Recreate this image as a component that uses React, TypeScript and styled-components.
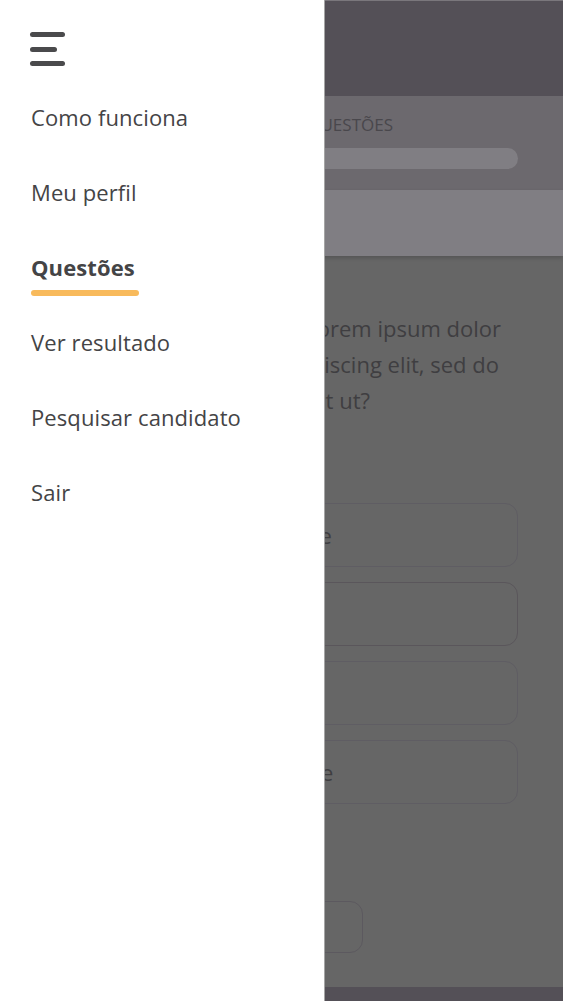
import React from "react";
import styled, { createGlobalStyle } from "styled-components";

const GlobalStyle = createGlobalStyle`
  html, body { margin: 0; padding: 0; }
  body { font-family: "Open Sans", "Noto Sans", sans-serif; background: #666666; }
  * { box-sizing: border-box; }
`;

const Screen = styled.div`
  position: relative;
  width: 563px;
  height: 1001px;
  overflow: hidden;
  background: #666666;
`;

/* ---------- underlying (dimmed) page ---------- */
const Page = styled.div`
  display: flex;
  flex-direction: column;
  height: 100%;
`;

const TopBar = styled.header`
  height: 96px;
  flex: none;
  background: #545057;
  border-top: 1px solid #7a777c;
`;

const ProgressSection = styled.section`
  height: 94px;
  flex: none;
  background: #6c696e;
  padding: 17px 45px 0;
  display: flex;
  flex-direction: column;
  gap: 11px;
`;

const ProgressLabel = styled.div`
  font-size: 17px;
  line-height: 24px;
  color: #49474c;
  text-transform: uppercase;
  text-align: right;
  padding-right: 125px;
`;

const Track = styled.div`
  height: 21px;
  border-radius: 11px;
  background: #807e83;
`;

const SubBar = styled.div`
  height: 66px;
  flex: none;
  background: #807e83;
  box-shadow: 0 2px 4px rgba(0, 0, 0, 0.18);
  position: relative;
  z-index: 1;
`;

const Content = styled.main`
  flex: 1;
  display: flex;
  flex-direction: column;
  padding: 54px 45px 0;
`;

const Question = styled.p`
  margin: 0;
  font-size: 22px;
  line-height: 36px;
  color: #3f3e41;
`;

const QLine = styled.span<{ $pr: number }>`
  display: block;
  white-space: nowrap;
  text-align: right;
  padding-right: ${(p) => p.$pr}px;
`;

const Options = styled.div`
  margin-top: 85px;
  display: flex;
  flex-direction: column;
  gap: 15px;
`;

const Option = styled.div<{ $selected?: boolean }>`
  height: 64px;
  border-radius: 13px;
  border: 1.5px solid ${(p) => (p.$selected ? "#5a565b" : "#5f5d63")};
  display: flex;
  align-items: center;
  gap: 16px;
  padding-left: 20px;
  font-size: 22px;
  color: #3f3e41;
`;

const Radio = styled.span`
  width: 24px;
  height: 24px;
  border-radius: 50%;
  border: 2px solid #555;
`;

const OptionText = styled.span<{ $shift: number }>`
  margin-left: ${(p) => p.$shift}px;
`;

const Actions = styled.div`
  margin-top: 97px;
  display: flex;
`;

const Button = styled.button`
  width: 318px;
  height: 52px;
  border-radius: 13px;
  border: 1.5px solid #5c595f;
  background: transparent;
  font: inherit;
  font-size: 18px;
  color: #3f3e41;
`;

const Footer = styled.footer`
  height: 14px;
  flex: none;
  margin-top: auto;
  background: #545057;
`;

/* ---------- drawer ---------- */
const Drawer = styled.nav`
  position: absolute;
  left: 0;
  top: 0;
  bottom: 0;
  width: 325px;
  background: #ffffff;
  border-right: 1px solid #a5a5a5;
  padding: 32px 0 0 30px;
  display: flex;
  flex-direction: column;
  z-index: 5;
`;

const Burger = styled.button`
  width: 35px;
  height: 34px;
  padding: 0;
  border: 0;
  background: none;
  display: flex;
  flex-direction: column;
  justify-content: space-between;
`;

const BurgerBar = styled.span<{ $w: number }>`
  display: block;
  width: ${(p) => p.$w}px;
  height: 5px;
  border-radius: 3px;
  background: #4a4a4c;
`;

const Menu = styled.ul`
  list-style: none;
  margin: 13px 0 0;
  padding: 0;
  display: flex;
  flex-direction: column;
`;

const MenuItem = styled.li`
  height: 75px;
  display: flex;
  align-items: center;
`;

const MenuLink = styled.a<{ $active?: boolean }>`
  position: relative;
  font-size: 22px;
  line-height: 30px;
  letter-spacing: 0.1px;
  color: #444446;
  font-weight: ${(p) => (p.$active ? 700 : 400)};
  text-decoration: none;
  margin-left: 1px;

  ${(p) =>
    p.$active &&
    `
    &::after {
      content: "";
      position: absolute;
      left: 0;
      top: calc(100% + 8px);
      width: 108px;
      height: 6px;
      border-radius: 3px;
      background: #f8ba5c;
    }
  `}
`;

const items = [
  { label: "Como funciona" },
  { label: "Meu perfil" },
  { label: "Questões", active: true },
  { label: "Ver resultado" },
  { label: "Pesquisar candidato" },
  { label: "Sair" },
];

const options = [
  { text: "Concordo totalmente", shift: 7 },
  { text: "Concordo", shift: 0, selected: true },
  { text: "Discordo", shift: 0 },
  { text: "Discordo totalmente", shift: 17 },
];

export default function App() {
  return (
    <>
      <GlobalStyle />
      <Screen>
        <Page>
          <TopBar />
          <ProgressSection>
            <ProgressLabel>Questão 1 de 20 questões</ProgressLabel>
            <Track />
          </ProgressSection>
          <SubBar />
          <Content>
            <Question>
              <QLine $pr={17}>Pergunta: lorem ipsum dolor</QLine>
              <QLine $pr={19}>sit amet, consectetur adipiscing elit, sed do</QLine>
              <QLine $pr={148}>eiusmod tempor incididunt ut?</QLine>
            </Question>
            <Options>
              {options.map((o) => (
                <Option key={o.text} $selected={o.selected}>
                  <Radio />
                  <OptionText $shift={o.shift}>{o.text}</OptionText>
                </Option>
              ))}
            </Options>
            <Actions>
              <Button>Voltar</Button>
            </Actions>
          </Content>
          <Footer />
        </Page>

        <Drawer>
          <Burger aria-label="Menu">
            <BurgerBar $w={35} />
            <BurgerBar $w={27} />
            <BurgerBar $w={35} />
          </Burger>
          <Menu>
            {items.map((it) => (
              <MenuItem key={it.label}>
                <MenuLink href="#" $active={it.active}>
                  {it.label}
                </MenuLink>
              </MenuItem>
            ))}
          </Menu>
        </Drawer>
      </Screen>
    </>
  );
}
